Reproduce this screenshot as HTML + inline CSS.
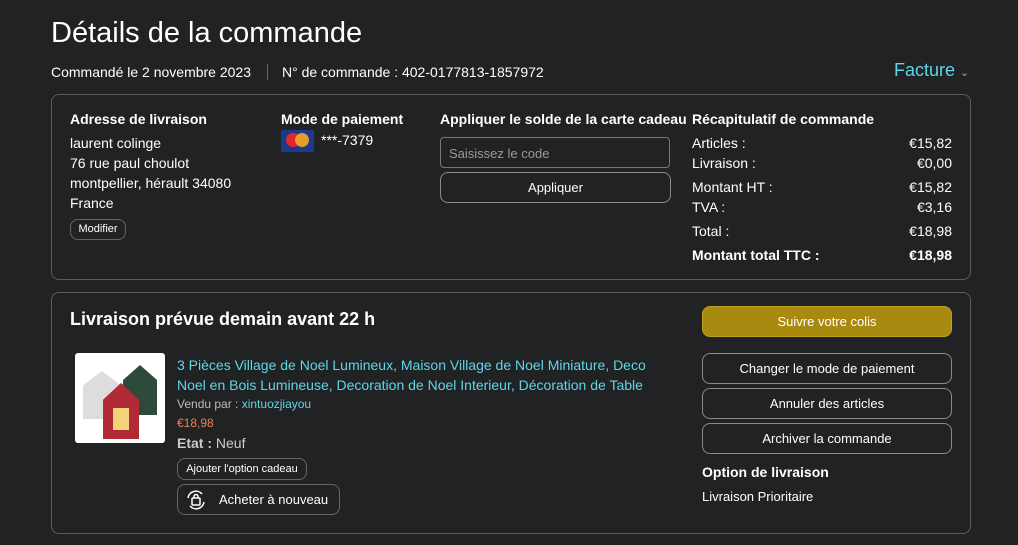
<!DOCTYPE html>
<html><head><meta charset="utf-8"><style>
*{box-sizing:border-box;margin:0;padding:0}
body{width:1018px;height:545px;background:#212223;color:#fff;font-family:"Liberation Sans",sans-serif;position:relative;overflow:hidden;font-size:14px}
.a{position:absolute;white-space:nowrap}
.card{position:absolute;border:1px solid #5c5d5f;border-radius:8px}
.b{font-weight:bold}
.btn{position:absolute;border:1px solid #8a8b8d;border-radius:8px;text-align:center;font-size:13px;color:#fff}
.t{color:#5fd6e8}
.r{display:flex;justify-content:space-between;height:20px;line-height:20px}
</style></head><body>
<div class="a" style="left:51px;top:17px;font-size:29px">Détails de la commande</div>
<div class="a" style="left:51px;top:64px;font-size:14px">Commandé le 2 novembre 2023</div>
<div class="a" style="left:267px;top:64px;width:1px;height:16px;background:#666"></div>
<div class="a" style="left:282px;top:64px;font-size:14px">N° de commande : 402-0177813-1857972</div>
<div class="a t" style="left:894px;top:60px;font-size:18px">Facture <span style="font-size:11px;color:#aaa">⌄</span></div>

<div class="card" style="left:51px;top:94px;width:920px;height:186px"></div>
<div class="a b" style="left:70px;top:111px">Adresse de livraison</div>
<div class="a" style="left:70px;top:133px;line-height:20px">laurent colinge<br>76 rue paul choulot<br>montpellier, hérault 34080<br>France</div>
<div class="btn" style="left:70px;top:219px;width:56px;height:21px;font-size:11px;line-height:19px;border-color:#666">Modifier</div>
<div class="a b" style="left:281px;top:111px">Mode de paiement</div>
<div class="a" style="left:281px;top:130px;width:33px;height:22px;background:#1b3a8a;border-radius:2px"><div class="a" style="left:5px;top:3px;width:14px;height:14px;border-radius:50%;background:#e3262b"></div><div class="a" style="left:14px;top:3px;width:14px;height:14px;border-radius:50%;background:#f4a823;opacity:.9"></div></div>
<div class="a" style="left:321px;top:132px">***-7379</div>
<div class="a b" style="left:440px;top:111px">Appliquer le solde de la carte cadeau</div>
<div class="a" style="left:440px;top:137px;width:230px;height:31px;border:1px solid #777;border-radius:4px;padding:8px 8px;color:#999;font-size:13px">Saisissez le code</div>
<div class="btn" style="left:440px;top:172px;width:231px;height:31px;line-height:29px">Appliquer</div>
<div class="a b" style="left:692px;top:111px">Récapitulatif de commande</div>
<div class="a" style="left:692px;top:133px;width:260px">
<div class="r"><span>Articles :</span><span>€15,82</span></div>
<div class="r"><span>Livraison :</span><span>€0,00</span></div>
<div class="r" style="margin-top:4px"><span>Montant HT :</span><span>€15,82</span></div>
<div class="r"><span>TVA :</span><span>€3,16</span></div>
<div class="r" style="margin-top:4px"><span>Total :</span><span>€18,98</span></div>
<div class="r b" style="margin-top:4px"><span>Montant total TTC :</span><span>€18,98</span></div>
</div>

<div class="card" style="left:51px;top:292px;width:920px;height:242px"></div>
<div class="a b" style="left:70px;top:309px;font-size:18px">Livraison prévue demain avant 22 h</div>
<div class="a" style="left:75px;top:353px;width:90px;height:90px;background:#fff;border-radius:3px;overflow:hidden">
<div class="a" style="left:8px;top:18px;width:38px;height:48px;background:#ddd;clip-path:polygon(50% 0,100% 30%,100% 100%,0 100%,0 30%)"></div>
<div class="a" style="left:48px;top:12px;width:34px;height:50px;background:#2d4a3a;clip-path:polygon(50% 0,100% 30%,100% 100%,0 100%,0 30%)"></div>
<div class="a" style="left:28px;top:30px;width:36px;height:56px;background:#b22a35;clip-path:polygon(50% 0,100% 30%,100% 100%,0 100%,0 30%)"></div>
<div class="a" style="left:38px;top:55px;width:16px;height:22px;background:#f3d27a"></div>
</div>
<div class="a t" style="left:177px;top:355px;line-height:20px">3 Pièces Village de Noel Lumineux, Maison Village de Noel Miniature, Deco<br>Noel en Bois Lumineuse, Decoration de Noel Interieur, Décoration de Table</div>
<div class="a" style="left:177px;top:397px;font-size:12px;color:#bbb">Vendu par : <span class="t">xintuozjiayou</span></div>
<div class="a" style="left:177px;top:416px;font-size:12px;color:#f08050">€18,98</div>
<div class="a" style="left:177px;top:435px;color:#ccc"><b>Etat :</b> Neuf</div>
<div class="btn" style="left:177px;top:458px;width:130px;height:22px;font-size:11px;line-height:20px;border-color:#666">Ajouter l'option cadeau</div>
<div class="btn" style="left:177px;top:484px;width:163px;height:31px;line-height:29px;border-color:#666;text-align:left;padding-left:41px">Acheter à nouveau</div>
<svg class="a" style="left:184px;top:488px" width="24" height="24" viewBox="0 0 24 24" fill="none" stroke="#fff" stroke-width="1.5"><path d="M4 10a8 8 0 0 1 14-4M20 14a8 8 0 0 1-14 4"/><rect x="8" y="10" width="8" height="7" rx="1"/><path d="M10 10V8.5a2 2 0 0 1 4 0V10"/></svg>

<div class="btn" style="left:702px;top:306px;width:250px;height:31px;line-height:29px;background:#a88a10;border-color:#c0a020">Suivre votre colis</div>
<div class="btn" style="left:702px;top:353px;width:250px;height:31px;line-height:29px">Changer le mode de paiement</div>
<div class="btn" style="left:702px;top:388px;width:250px;height:31px;line-height:29px">Annuler des articles</div>
<div class="btn" style="left:702px;top:423px;width:250px;height:31px;line-height:29px">Archiver la commande</div>
<div class="a b" style="left:702px;top:464px">Option de livraison</div>
<div class="a" style="left:702px;top:489px;font-size:13px">Livraison Prioritaire</div>
</body></html>
